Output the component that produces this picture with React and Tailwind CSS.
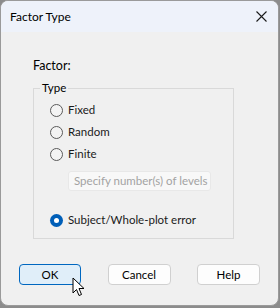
import React from "react";

const Radio = ({ checked, label }) => (
  <label className="flex items-center gap-[5px] h-[22px] whitespace-nowrap">
    {checked ? (
      <span className="w-[13px] h-[13px] rounded-full bg-[#005fb8] flex items-center justify-center">
        <span className="w-[5px] h-[5px] rounded-full bg-white" />
      </span>
    ) : (
      <span className="w-[13px] h-[13px] rounded-full border border-[#5a5a5a] bg-[#f3f3f3]" />
    )}
    <span>{label}</span>
  </label>
);

const Button = ({ children, primary }) => (
  <button
    className={
      primary
        ? "w-[62px] h-[21px] rounded-[4px] border border-[#0067c0] bg-[#e0eef9] text-[11.5px] text-black"
        : "w-[63px] h-[21px] rounded-[4px] border border-[#d0d0d0] bg-[#fdfdfd] text-[11.5px] text-black"
    }
  >
    {children}
  </button>
);

const App = () => {
  return (
    <div className="w-[280px] h-[308px] bg-[#8c8c8c] font-['Lato',sans-serif] text-[11.5px] text-[#1a1a1a]">
      <div className="relative w-[279px] h-[306px] rounded-[8px] border border-[#9a9a9a] bg-[#f0f0f0] overflow-hidden flex flex-col">
        {/* Title bar */}
        <div className="h-[31px] bg-[#eef2fa] flex items-center justify-between pl-[9px] pr-[11px] shrink-0">
          <span className="text-[12px] text-black">Factor Type</span>
          <svg width="11" height="11" viewBox="0 0 11 11">
            <path d="M0.5 0.5 L10.5 10.5 M10.5 0.5 L0.5 10.5" stroke="#1a1a1a" strokeWidth="1.1" />
          </svg>
        </div>

        {/* Body */}
        <div className="flex flex-col pl-[32px] pr-[44px] pt-[25px]">
          <div className="text-[12.5px] leading-[17px] text-black">Factor:</div>

          <fieldset className="mt-[7px] border border-[#d9d9d9] pl-[16px] pr-[20px] pb-[8px] h-[158px]">
            <legend className="px-[2px] ml-[-10px] leading-[14px] text-black">Type</legend>
            <div className="flex flex-col pt-[4px]">
              <Radio label="Fixed" />
              <Radio label="Random" />
              <Radio label="Finite" />
              <div className="ml-[18px] mt-[6px] h-[20px] w-[143px] rounded-[3px] border border-[#e8e8e8] bg-[#f8f8f8] flex items-center pl-[5px] text-[#a3a3a3] whitespace-nowrap">
                Specify number(s) of levels
              </div>
              <div className="mt-[18px]">
                <Radio checked label="Subject/Whole-plot error" />
              </div>
            </div>
          </fieldset>
        </div>

        {/* Buttons */}
        <div className="flex justify-between pl-[18px] pr-[18px] mt-[25px]">
          <Button primary>OK</Button>
          <Button>Cancel</Button>
          <Button>Help</Button>
        </div>

        {/* Mouse cursor */}
        <svg className="absolute left-[71px] top-[276px]" width="14" height="21" viewBox="0 0 14 21">
          <path
            d="M1 1 L1 16 L4.5 12.5 L7 18.5 L9.5 17.5 L7 11.5 L12 11.5 Z"
            fill="#ffffff"
            stroke="#000000"
            strokeWidth="1"
            strokeLinejoin="round"
          />
        </svg>
      </div>
    </div>
  );
};

export default App;
